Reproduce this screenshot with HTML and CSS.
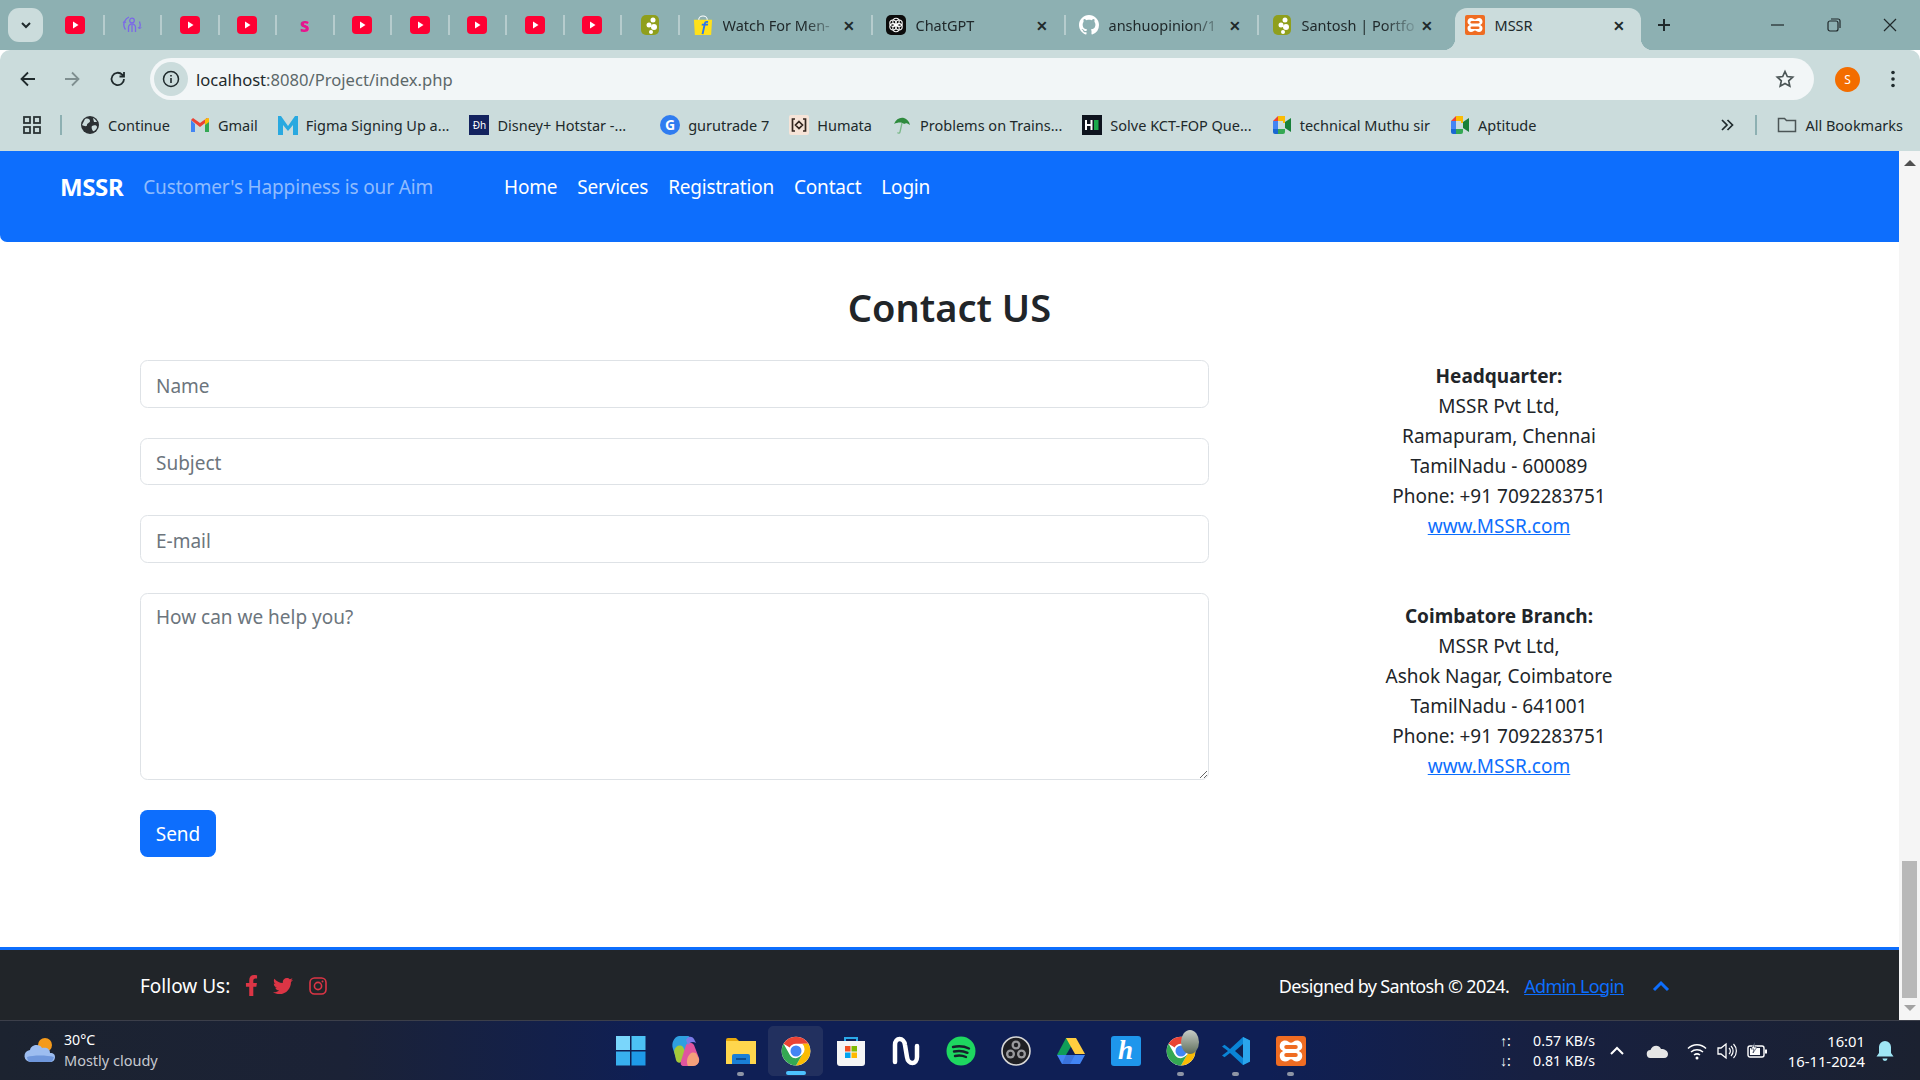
FILE: index.html
```html
<!DOCTYPE html>
<html lang="en">
<head>
  <meta charset="UTF-8" />
  <meta name="viewport" content="width=device-width, initial-scale=1.0" />
  <title>MSSR</title>
  <link rel="stylesheet" href="styles.css">
</head>
<body>
  <!-- icon sheet -->
  <svg class="sprites" xmlns="http://www.w3.org/2000/svg">
    <symbol id="yt" viewBox="0 0 20 20"><rect y="1" width="20" height="18" rx="4" fill="#ff0033"/><path d="M8 6.500l5.500 3.500L8 13.500z" fill="#fff"/></symbol>
    <symbol id="person" viewBox="0 0 20 20"><g fill="none" stroke="#7b68e8" stroke-width="1.300"><circle cx="10" cy="5.500" r="2.300"/><path d="M6.500 17v-4.500a3.500 3.500 0 0 1 7 0V17M10 10v7"/><path d="M2.500 6.500A8.500 8.500 0 0 1 7 2M17.500 6.500a8.500 8.500 0 0 1 0 7M2.500 6.500a8.500 8.500 0 0 0 1 8"/></g><path d="M16 12l1.500 2 1.800-1.800M1 8l1.500-2L4 8" fill="none" stroke="#7b68e8" stroke-width="1"/></symbol>
    <symbol id="santosh" viewBox="0 0 20 20"><rect x="1" width="18" height="20" rx="5" fill="#8f9f1c"/><circle cx="13" cy="5" r="2.500" fill="#fff"/><circle cx="9" cy="10" r="2.500" fill="#fff"/><circle cx="14" cy="12" r="3" fill="#fff"/><circle cx="11" cy="17" r="2" fill="#fff"/></symbol>
    <symbol id="flipkart" viewBox="0 0 21 21"><path d="M1 5h19l-1 16H2z" fill="#ffe11b"/><path d="M6 5a4.500 4 0 0 1 9 0" fill="none" stroke="#fff" stroke-width="1.200"/><path d="M9 20l2-9H9l.4-1.800h2C12 6.500 13.500 6 16 6.500l-.4 1.800c-1.500-.2-2 0-2.300 1H16l-.4 1.800h-2.600l-2 9z" fill="#2874f0"/></symbol>
    <symbol id="chatgpt" viewBox="0 0 20 20"><rect width="20" height="20" rx="5" fill="#0c0c0c"/><g fill="none" stroke="#fff" stroke-width="1.100"><circle cx="10" cy="6.500" r="3.200"/><circle cx="13" cy="8.200" r="3.200"/><circle cx="13" cy="11.800" r="3.200"/><circle cx="10" cy="13.500" r="3.200"/><circle cx="7" cy="11.800" r="3.200"/><circle cx="7" cy="8.200" r="3.200"/></g></symbol>
    <symbol id="github" viewBox="0 0 16 16"><path fill="#fff" d="M8 0C3.580 0 0 3.580 0 8c0 3.540 2.290 6.530 5.470 7.590.4.070.55-.17.55-.38 0-.19-.01-.82-.01-1.490-2.010.37-2.530-.49-2.690-.94-.09-.23-.48-.94-.82-1.130-.28-.15-.68-.52-.01-.53.63-.01 1.080.58 1.230.82.72 1.210 1.870.87 2.330.66.07-.52.28-.87.51-1.070-1.780-.2-3.640-.89-3.640-3.950 0-.87.31-1.590.82-2.150-.08-.2-.36-1.020.08-2.120 0 0 .67-.21 2.200.82.64-.18 1.320-.27 2-.27.68 0 1.360.09 2 .27 1.530-1.040 2.200-.82 2.200-.82.44 1.100.16 1.920.08 2.120.51.56.82 1.270.82 2.150 0 3.070-1.870 3.750-3.650 3.950.29.25.54.73.54 1.480 0 1.070-.01 1.930-.01 2.200 0 .21.15.46.55.38A8.013 8.013 0 0 0 16 8c0-4.420-3.580-8-8-8z"/></symbol>
    <symbol id="xampp" viewBox="0 0 20 20"><rect width="20" height="20" rx="2" fill="#ef6c22"/><path d="M6 3c2 0 3 1.500 4 1.500S12 3 14 3s3.500 1.500 3.500 3.800-1.500 2.500-2.300 3.200c.8.700 2.300 1 2.300 3.200S16 17 14 17s-3-1.500-4-1.500S8 17 6 17s-3.500-1.500-3.500-3.800S4 10.700 4.800 10C4 9.300 2.500 9 2.500 6.800S4 3 6 3z" fill="#fff"/><rect x="5.500" y="6" width="9" height="2.600" rx="1.300" fill="#ef6c22"/><rect x="5.500" y="11.400" width="9" height="2.600" rx="1.300" fill="#ef6c22"/></symbol>
    <symbol id="meet" viewBox="0 0 20 20"><path d="M1 6l5-5v5z" fill="#ea4335"/><path d="M6 1h7v5H6z" fill="#fbbc04"/><path d="M1 6h5v8H1z" fill="#4285f4"/><path d="M1 14h5v5H3a2 2 0 0 1-2-2z" fill="#1967d2"/><path d="M6 14h7v3a2 2 0 0 1-2 2H6z" fill="#34a853"/><path d="M13 7l6-4v14l-6-4z" fill="#188038"/><path d="M11 1h2v7h-2z" fill="#fbbc04"/></symbol>
    <symbol id="chrome" viewBox="0 0 48 48"><circle cx="24" cy="24" r="23" fill="#fff"/><path d="M24 1a23 23 0 0 1 19.900 11.500H24a11.500 11.500 0 0 0-10 5.800L4.100 12.500A23 23 0 0 1 24 1z" fill="#ea4335"/><path d="M43.900 12.500A23 23 0 0 1 24 47l10-17.500a11.500 11.500 0 0 0 0-17z" fill="#fbbc04"/><path d="M24 47A23 23 0 0 1 4.100 12.500L14 29.800a11.500 11.500 0 0 0 10 5.700l10-6z" fill="#34a853"/><circle cx="24" cy="24" r="11" fill="#fff"/><circle cx="24" cy="24" r="8.800" fill="#4285f4"/></symbol>
  </svg>

  <div class="screen">
    <!-- tab strip -->
    <div class="tabstrip">
      <button class="tab-search"><svg width="14" height="14" viewBox="0 0 14 14"><path d="M3 5l4 4 4-4" fill="none" stroke="#1f2a2c" stroke-width="2"/></svg></button>
      <div class="tab"><svg class="fav"><use href="#yt"/></svg></div>
      <div class="tab"><svg class="fav"><use href="#person"/></svg></div>
      <div class="tab"><svg class="fav"><use href="#yt"/></svg></div>
      <div class="tab"><svg class="fav"><use href="#yt"/></svg></div>
      <div class="tab"><span class="pink-s">s</span></div>
      <div class="tab"><svg class="fav"><use href="#yt"/></svg></div>
      <div class="tab"><svg class="fav"><use href="#yt"/></svg></div>
      <div class="tab"><svg class="fav"><use href="#yt"/></svg></div>
      <div class="tab"><svg class="fav"><use href="#yt"/></svg></div>
      <div class="tab"><svg class="fav"><use href="#yt"/></svg></div>
      <div class="tab"><svg class="fav"><use href="#santosh"/></svg></div>
      <div class="tab tab-wide"><svg class="fav"><use href="#flipkart"/></svg><span class="tab-title">Watch For Men-</span><span class="tab-x">&#x2715;</span></div>
      <div class="tab tab-wide"><svg class="fav"><use href="#chatgpt"/></svg><span class="tab-title">ChatGPT</span><span class="tab-x">&#x2715;</span></div>
      <div class="tab tab-wide"><svg class="fav"><use href="#github"/></svg><span class="tab-title">anshuopinion/1</span><span class="tab-x">&#x2715;</span></div>
      <div class="tab tab-wide tab-last"><svg class="fav"><use href="#santosh"/></svg><span class="tab-title">Santosh | Portfo</span><span class="tab-x">&#x2715;</span></div>
      <div class="tab tab-active"><svg class="fav"><use href="#xampp"/></svg><span class="tab-title">MSSR</span><span class="tab-x">&#x2715;</span></div>
      <svg class="new-tab" width="16" height="16" viewBox="0 0 16 16"><path d="M8 2v12M2 8h12" stroke="#20292b" stroke-width="2"/></svg>
      <div class="win-controls">
        <svg width="16" height="16" viewBox="0 0 16 16"><path d="M1 8h13" stroke="#20292b" stroke-width="1.200"/></svg>
        <svg width="16" height="16" viewBox="0 0 16 16"><rect x="2" y="4" width="10" height="10" rx="2" fill="none" stroke="#20292b" stroke-width="1.200"/><path d="M5 2h7a2 2 0 0 1 2 2v7" fill="none" stroke="#20292b" stroke-width="1.200"/></svg>
        <svg width="16" height="16" viewBox="0 0 16 16"><path d="M2 2l12 12M14 2L2 14" stroke="#20292b" stroke-width="1.200"/></svg>
      </div>
    </div>

    <!-- address bar -->
    <div class="toolbar">
      <svg class="tool" width="20" height="20" viewBox="0 0 20 20"><path d="M17 10H4M10 3.500L3.500 10l6.500 6.500" fill="none" stroke="#1f2a2c" stroke-width="1.800"/></svg>
      <svg class="tool" width="20" height="20" viewBox="0 0 20 20"><path d="M3 10h13M10 3.500l6.500 6.500-6.500 6.500" fill="none" stroke="#7f8f90" stroke-width="1.800"/></svg>
      <svg class="tool tool-reload" width="20" height="20" viewBox="0 0 20 20"><path d="M16 10a6.200 6.200 0 1 1-1.800-4.400L16 7.400M16 3v4.500h-4.500" fill="none" stroke="#1f2a2c" stroke-width="1.800"/></svg>
      <div class="omnibox">
        <span class="site-info"><svg width="18" height="18" viewBox="0 0 18 18"><circle cx="9" cy="9" r="7.500" fill="none" stroke="#1f2a2c" stroke-width="1.500"/><path d="M9 8v5M9 5v1.600" stroke="#1f2a2c" stroke-width="1.600"/></svg></span>
        <span class="url"><span class="url-host">localhost</span>:8080/Project/index.php</span>
        <svg class="star" width="20" height="20" viewBox="0 0 20 20"><path d="M10 2.500l2.300 5 5.400.6-4 3.700 1.100 5.400-4.800-2.700-4.800 2.700 1.100-5.400-4-3.700 5.400-.6z" fill="none" stroke="#4b5556" stroke-width="1.700"/></svg>
      </div>
      <span class="avatar">S</span>
      <svg class="menu-dots" width="6" height="20" viewBox="0 0 6 20"><circle cx="3" cy="3.500" r="1.800" fill="#1f2a2c"/><circle cx="3" cy="10" r="1.800" fill="#1f2a2c"/><circle cx="3" cy="16.500" r="1.800" fill="#1f2a2c"/></svg>
    </div>

    <!-- bookmarks -->
    <div class="bookmarks">
      <svg class="apps" width="20" height="20" viewBox="0 0 20 20"><g fill="none" stroke="#2b3436" stroke-width="1.800"><rect x="2" y="2" width="6" height="6"/><rect x="12" y="2" width="6" height="6"/><rect x="2" y="12" width="6" height="6"/><rect x="12" y="12" width="6" height="6"/></g></svg>
      <span class="bm-sep"></span>
      <a class="bm"><svg class="bm-icon" viewBox="0 0 20 20"><circle cx="10" cy="10" r="9" fill="#2b3033"/><path d="M5 4c3-1 5 0 5 2s-3 2-3 4-3 1-5 0zM12 11c2-1 5-1 5 1s-3 5-4 4-2-4-1-5zM13 3c2 1 3 2 4 4l-3 0z" fill="#cbdcdc"/></svg>Continue</a>
      <a class="bm"><svg class="bm-icon" viewBox="0 0 20 20"><path d="M1 5v12h4V9z" fill="#4285f4"/><path d="M19 5v12h-4V9z" fill="#34a853"/><path d="M1 5l9 7 9-7-2-2-7 5-7-5z" fill="#ea4335"/><path d="M15 4l4-1v4l-4 3z" fill="#fbbc04"/></svg>Gmail</a>
      <a class="bm"><svg class="bm-icon" viewBox="0 0 20 20"><path d="M0 20V1h3l7 10 7-10h3v19h-5V10l-5 6-5-6v10z" fill="#29a9e0"/></svg>Figma Signing Up a...</a>
      <a class="bm"><span class="bm-square bm-disney">Ðh</span>Disney+ Hotstar -...</a>
      <a class="bm bm-gap"><span class="bm-square bm-google">G</span>gurutrade 7</a>
      <a class="bm"><svg class="bm-icon" viewBox="0 0 20 20"><rect width="20" height="20" rx="2" fill="#f6e4d8"/><path d="M6 4H3.500v12H6M14 4h2.500v12H14M10 6.500L13.500 10 10 13.500 6.500 10z" fill="none" stroke="#33261f" stroke-width="1.700"/></svg>Humata</a>
      <a class="bm"><svg class="bm-icon" viewBox="0 0 20 20"><path d="M2 9C4 4 8 2 12 3c3 1 5 3 6 7-3-2-4-2-6-1-2-2-6-2-10 0z" fill="#2e8b3d"/><path d="M10 8l-2 9c-.3 1.500-2 1.500-2.500.5" fill="none" stroke="#7bb98a" stroke-width="1.300"/></svg>Problems on Trains...</a>
      <a class="bm"><svg class="bm-icon" viewBox="0 0 20 20"><rect width="20" height="20" fill="#0e141e"/><path d="M4 5v10M9.500 5v10M4 10h5.500" stroke="#fff" stroke-width="2"/><rect x="12" y="5" width="4.500" height="10" fill="#1ba94c"/></svg>Solve KCT-FOP Que...</a>
      <a class="bm"><svg class="bm-icon"><use href="#meet"/></svg>technical Muthu sir</a>
      <a class="bm"><svg class="bm-icon"><use href="#meet"/></svg>Aptitude</a>
      <svg class="bm-more" width="16" height="16" viewBox="0 0 16 16"><path d="M3 3l5 5-5 5M8.500 3l5 5-5 5" fill="none" stroke="#1f2a2c" stroke-width="1.700"/></svg>
      <span class="bm-sep bm-sep-right"></span>
      <a class="bm bm-all"><svg class="bm-icon bm-folder" viewBox="0 0 20 18"><path d="M1.500 15.500v-13h6l2 2h9v11z" fill="none" stroke="#4b5556" stroke-width="1.500"/></svg>All Bookmarks</a>
    </div>

    <!-- the page itself -->
    <div class="viewport">
      <div class="page">
        <nav class="navbar">
          <a class="brand">MSSR</a>
          <span class="tagline">Customer's Happiness is our Aim</span>
          <ul class="nav-links">
            <li><a>Home</a></li>
            <li><a>Services</a></li>
            <li><a>Registration</a></li>
            <li><a>Contact</a></li>
            <li><a>Login</a></li>
          </ul>
        </nav>

        <main class="contact">
          <h1>Contact US</h1>
          <div class="contact-row">
            <form class="contact-form">
              <input type="text" placeholder="Name" />
              <input type="text" placeholder="Subject" />
              <input type="text" placeholder="E-mail" />
              <textarea placeholder="How can we help you?"></textarea>
              <button type="button">Send</button>
            </form>
            <aside class="branches">
              <address>
                <strong>Headquarter:</strong><br>
                MSSR Pvt Ltd,<br>
                Ramapuram, Chennai<br>
                TamilNadu - 600089<br>
                Phone: +91 7092283751<br>
                <a href="#">www.MSSR.com</a>
              </address>
              <address>
                <strong>Coimbatore Branch:</strong><br>
                MSSR Pvt Ltd,<br>
                Ashok Nagar, Coimbatore<br>
                TamilNadu - 641001<br>
                Phone: +91 7092283751<br>
                <a href="#">www.MSSR.com</a>
              </address>
            </aside>
          </div>
        </main>

        <footer class="site-footer">
          <div class="follow">
            <span>Follow Us:</span>
            <svg class="soc-f" viewBox="0 0 320 512"><path d="M279.140 288l14.220-92.660h-88.910v-60.130c0-25.350 12.420-50.060 52.240-50.060h40.420V6.260S260.430 0 225.360 0c-73.220 0-121.080 44.380-121.080 124.720v70.620H22.890V288h81.390v224h100.170V288z"/></svg>
            <svg class="soc-t" viewBox="0 0 512 512"><path d="M459.370 151.716c.325 4.548.325 9.097.325 13.645 0 138.720-105.583 298.558-298.558 298.558-59.452 0-114.680-17.219-161.137-47.106 8.447.974 16.568 1.299 25.340 1.299 49.055 0 94.213-16.568 130.274-44.832-46.132-.975-84.792-31.188-98.112-72.772 6.498.974 12.995 1.624 19.818 1.624 9.421 0 18.843-1.300 27.614-3.573-48.081-9.747-84.143-51.980-84.143-102.985v-1.299c13.969 7.797 30.214 12.670 47.431 13.319-28.264-18.843-46.781-51.005-46.781-87.391 0-19.492 5.197-37.360 14.294-52.954 51.655 63.675 129.300 105.258 216.365 109.807-1.624-7.797-2.599-15.918-2.599-24.040 0-57.828 46.782-104.934 104.934-104.934 30.213 0 57.502 12.670 76.670 33.137 23.715-4.548 46.456-13.320 66.599-25.340-7.798 24.366-24.366 44.833-46.132 57.827 21.117-2.273 41.584-8.122 60.426-16.243-14.292 20.791-32.161 39.308-52.628 54.253z"/></svg>
            <svg class="soc-i" viewBox="0 0 18 18"><g fill="none" stroke="#dc3545" stroke-width="1.600"><rect x="1" y="1" width="16" height="16" rx="4.500"/><circle cx="9" cy="9" r="3.600"/></g><circle cx="13.500" cy="4.500" r="1" fill="#dc3545"/></svg>
          </div>
          <div class="credits">
            <span>Designed by Santosh © 2024.</span>
            <a href="#">Admin Login</a>
            <svg class="to-top" width="18" height="12" viewBox="0 0 18 12"><path d="M2 10l7-7 7 7" fill="none" stroke="#0d6efd" stroke-width="3"/></svg>
          </div>
        </footer>
      </div>
      <div class="scrollbar">
        <span class="arrow-up"></span>
        <span class="thumb"></span>
        <span class="arrow-down"></span>
      </div>
    </div>

    <!-- windows taskbar -->
    <div class="taskbar">
      <div class="weather">
        <svg width="32" height="26" viewBox="0 0 32 26"><circle cx="21" cy="8" r="7" fill="#f59a1b"/><path d="M7 25a6 6 0 0 1-1-12c1-5 9-7 12-2 5-1 8 1 8 5 4 0 5 2 5 4 0 3-2 5-5 5z" fill="#9dbdf0"/><path d="M3 20c6-2 20-2 27 0-1 3-2 5-4 5H7c-2 0-4-2-4-5z" fill="#6f97dc"/></svg>
        <div class="weather-text"><span>30°C</span><span class="weather-sub">Mostly cloudy</span></div>
      </div>
      <div class="task-icons">
        <span class="task"><svg width="30" height="30" viewBox="0 0 30 30"><rect y="0" width="14" height="14" fill="#7ad6fb"/><rect x="15.500" width="14" height="14" fill="#4cc2f5"/><rect y="15.500" width="14" height="14" fill="#38b0ee"/><rect x="15.500" y="15.500" width="14" height="14" fill="#1e9ae8"/></svg></span>
        <span class="task"><svg width="30" height="32" viewBox="0 0 30 32"><path d="M8 1h8c3 0 4 2 3 5l-4 17c-1 5-8 5-10 0L2 14C0 8 3 2 8 1z" fill="#2f9fe0"/><path d="M3 16c1-5 6-7 9-4l2 4-3 10c-2 3-5 2-6-1z" fill="#a4c93a"/><path d="M15 10c2-3 6-3 8 0l5 13c1 4-2 8-6 8h-9c-3 0-4-2-3-5z" fill="#e0559e"/><path d="M19 19c2-2 6-2 7 1l2 4c.5 4-2 7-6 7h-5c-2-4-1-9 2-12z" fill="#f4a07a"/><path d="M15 5c2-4 6-4 8-1l2 4c-3-2-6-1-8 2z" fill="#7a7ae8"/></svg></span>
        <span class="task task-open"><svg width="30" height="30" viewBox="0 0 30 30"><path d="M0 4a2 2 0 0 1 2-2h8l3 3H0z" fill="#e8a80c"/><path d="M0 5h30v23H0z" fill="#ffd64d"/><path d="M6 20a2 2 0 0 1 2-2h14a2 2 0 0 1 2 2v8H6z" fill="#1a7fd6"/><path d="M10 23h10" stroke="#0b4f94" stroke-width="2"/></svg></span>
        <span class="task task-active"><svg width="30" height="30"><use href="#chrome"/></svg></span>
        <span class="task"><svg width="30" height="32" viewBox="0 0 30 32"><path d="M9 6V3h12v3" fill="none" stroke="#2aa8e8" stroke-width="2"/><path d="M1 6h28v22a3 3 0 0 1-3 3H4a3 3 0 0 1-3-3z" fill="#f5f5f5"/><rect x="9" y="11" width="5.500" height="5.500" fill="#f25022"/><rect x="15.500" y="11" width="5.500" height="5.500" fill="#7fba00"/><rect x="9" y="17.500" width="5.500" height="5.500" fill="#00a4ef"/><rect x="15.500" y="17.500" width="5.500" height="5.500" fill="#ffb900"/></svg></span>
        <span class="task"><svg width="28" height="30" viewBox="0 0 28 30"><path d="M3 26V9c0-8 9-8 10 0l2 12c1 8 10 8 10 0V10" fill="none" stroke="#fff" stroke-width="4.500" stroke-linecap="round"/></svg></span>
        <span class="task"><svg width="30" height="30" viewBox="0 0 30 30"><circle cx="15" cy="15" r="14.500" fill="#1ed760"/><path d="M7 11c6-1.500 11-1 16 1.500M8 15.500c5-1 9-.8 13.500 1.300M9 20c4-.8 7.500-.6 11 1" fill="none" stroke="#16212b" stroke-width="2.400" stroke-linecap="round"/></svg></span>
        <span class="task"><svg width="30" height="30" viewBox="0 0 30 30"><circle cx="15" cy="15" r="14" fill="#1f1f23" stroke="#d8d8d8" stroke-width="1.600"/><g fill="#9a9a9e"><circle cx="15" cy="9" r="4.500"/><circle cx="20.500" cy="18" r="4.500"/><circle cx="9.500" cy="18" r="4.500"/></g><g fill="#1f1f23"><circle cx="15" cy="9" r="2.200"/><circle cx="20.500" cy="18" r="2.200"/><circle cx="9.500" cy="18" r="2.200"/></g></svg></span>
        <span class="task"><svg width="30" height="28" viewBox="0 0 30 28"><path d="M10 1h10l-10 17H1z" fill="#0f9d58"/><path d="M20 1l9 16h-10L10 1z" fill="#ffcd40"/><path d="M1 18h28l-5 9H6z" fill="#4285f4"/><path d="M10 18h9l-5 9H6z" fill="#3a73dc"/></svg></span>
        <span class="task"><span class="humaans">h</span></span>
        <span class="task task-open"><svg width="30" height="30"><use href="#chrome"/></svg><span class="chrome-badge"></span></span>
        <span class="task task-open"><svg width="30" height="30" viewBox="0 0 30 30"><path d="M22 1l7 3.500v21L22 29 9 17l-5.500 4.200L1 19.500 7 15 1 10.500l2.500-1.700L9 13z" fill="#0a84d6"/><path d="M22 8l-8 7 8 7z" fill="#0f1f4f"/><path d="M22 1l7 3.500v21L22 29z" fill="#2ba5ec"/></svg></span>
        <span class="task task-open"><svg width="30" height="30"><use href="#xampp"/></svg></span>
      </div>
      <div class="tray">
        <div class="netspeed">
          <span class="net-line"><span>↑:</span><span>0.57 KB/s</span></span>
          <span class="net-line"><span>↓:</span><span>0.81 KB/s</span></span>
        </div>
        <svg class="tray-up" width="16" height="16" viewBox="0 0 16 16"><path d="M2 11l6-6 6 6" fill="none" stroke="#fff" stroke-width="2"/></svg>
        <svg class="tray-cloud" width="22" height="14" viewBox="0 0 22 14"><path d="M5 14a4 4 0 0 1-.500-8C6 1 13 0 15 5c4 0 7 2 7 5 0 2-1 4-4 4z" fill="#e6e6e6"/></svg>
        <svg class="tray-wifi" width="20" height="18" viewBox="0 0 20 18"><g fill="none" stroke="#fff" stroke-width="1.500"><path d="M1 6.500c5-5 13-5 18 0M4 10c3.500-3 8.500-3 12 0M7 13c2-1.500 4-1.500 6 0"/></g><circle cx="10" cy="16" r="1.500" fill="#fff"/></svg>
        <svg class="tray-vol" width="20" height="18" viewBox="0 0 20 18"><path d="M1 6h3l5-4v14l-5-4H1z" fill="none" stroke="#fff" stroke-width="1.300"/><path d="M12 6a4 4 0 0 1 0 6M14 4a7 7 0 0 1 0 10M16.500 2a10 10 0 0 1 0 14" fill="none" stroke="#fff" stroke-width="1.200"/></svg>
        <svg class="tray-batt" width="20" height="18" viewBox="0 0 20 18"><rect x="1" y="4" width="16" height="11" rx="2" fill="none" stroke="#fff" stroke-width="1.400"/><rect x="3" y="6" width="10" height="7" fill="#fff"/><rect x="18" y="7.500" width="2" height="4" fill="#fff"/><path d="M8 0L4 7h3l-1 4 4-6H7z" fill="#fff" stroke="#14203a" stroke-width=".6"/></svg>
        <div class="clock"><span>16:01</span><span>16-11-2024</span></div>
        <svg class="tray-bell" width="18" height="22" viewBox="0 0 18 22"><path d="M9 1a6 6 0 0 1 6 6v6l2.500 3.500H.5L3 13V7a6 6 0 0 1 6-6z" fill="#9fe6f5"/><path d="M6.500 18.500h5a2.500 2.500 0 0 1-5 0z" fill="#9fe6f5"/></svg>
      </div>
    </div>
  </div>
</body>
</html>
```

FILE: styles.css
```css
* {
  box-sizing: border-box;
}
html, body {
  margin: 0;
  height: 100%;
  overflow: hidden;
}
body {
  font-family: "Noto Sans", Arial, sans-serif;
  background: #fff;
}
.sprites {
  display: none;
}
.screen {
  width: 1920px;
  height: 1080px;
  display: flex;
  flex-direction: column;
}

/* tab strip */
.tabstrip {
  height: 50px;
  flex: none;
  display: flex;
  align-items: flex-start;
  background: #8db0b2;
  color: #20292b;
  font-size: 14.5px;
}
.tab-search {
  width: 35px;
  height: 34px;
  margin: 8px 4px 0 8px;
  padding: 0;
  border: none;
  border-radius: 11px;
  background: #cbdcdc;
  display: flex;
  align-items: center;
  justify-content: center;
}
.tab {
  width: 57.5px;
  height: 20px;
  margin-top: 15px;
  flex: none;
  display: flex;
  align-items: center;
  justify-content: center;
  border-right: 2px solid #b6cccd;
}
.fav {
  width: 20px;
  height: 20px;
  flex: none;
}
.pink-s {
  color: #e6168f;
  font-weight: 800;
  font-size: 19px;
  line-height: 20px;
}
.tab-wide {
  width: 193px;
  padding: 0 15px 0 13px;
  justify-content: flex-start;
}
.tab-last {
  width: 196px;
  border-right: none;
  padding-right: 21px;
}
.tab-title {
  flex: 1;
  margin-left: 10px;
  white-space: nowrap;
  -webkit-mask-image: linear-gradient(to right, #000 72%, rgba(0, 0, 0, 0.15) 100%);
  mask-image: linear-gradient(to right, #000 72%, rgba(0, 0, 0, 0.15) 100%);
}
.tab-x {
  width: 14px;
  margin-left: 6px;
  font-size: 14px;
  font-weight: 700;
  text-align: center;
}
.tab-active {
  position: relative;
  width: 186px;
  height: 42px;
  margin-top: 8px;
  padding: 0 15px 8px 10px;
  justify-content: flex-start;
  border: none;
  border-radius: 12px 12px 0 0;
  background: #cbdcdc;
}
.tab-active .tab-title {
  -webkit-mask-image: none;
  mask-image: none;
}
.tab-active::before,
.tab-active::after {
  content: "";
  position: absolute;
  bottom: 0;
  width: 12px;
  height: 12px;
}
.tab-active::before {
  left: -12px;
  background: radial-gradient(circle at 0 0, transparent 12px, #cbdcdc 12.5px);
}
.tab-active::after {
  right: -12px;
  background: radial-gradient(circle at 100% 0, transparent 12px, #cbdcdc 12.5px);
}
.new-tab {
  margin: 17px 0 0 15px;
  flex: none;
}
.win-controls {
  margin: 17px 22px 0 auto;
  display: flex;
  gap: 40px;
}

/* address bar */
.toolbar {
  height: 50px;
  flex: none;
  padding: 8px 0 0 18px;
  display: flex;
  align-items: center;
  background: #cbdcdc;
  border-radius: 10px 10px 0 0;
}
.tool {
  flex: none;
  margin-right: 24px;
}
.tool-reload {
  margin-left: 2px;
}
.omnibox {
  width: 1664px;
  height: 42px;
  flex: none;
  margin-left: -2px;
  padding: 0 19px 0 4px;
  display: flex;
  align-items: center;
  border-radius: 21px;
  background: #f2f6f7;
}
.site-info {
  width: 34px;
  height: 34px;
  flex: none;
  display: flex;
  align-items: center;
  justify-content: center;
  border-radius: 50%;
  background: #cbdcdc;
}
.url {
  margin-left: 8px;
  font-size: 16.6px;
  color: #5c686a;
}
.url-host {
  color: #1f2a2c;
}
.star {
  margin-left: auto;
}
.avatar {
  width: 25px;
  height: 25px;
  margin-left: 21px;
  flex: none;
  border-radius: 50%;
  background: #f36d00;
  color: #fff;
  font-size: 12px;
  line-height: 25px;
  text-align: center;
}
.menu-dots {
  margin-left: 30px;
  flex: none;
}

/* bookmarks */
.bookmarks {
  height: 51px;
  flex: none;
  padding: 0 17px 2px 22px;
  display: flex;
  align-items: center;
  background: #cbdcdc;
  color: #20292b;
  font-size: 14.5px;
}
.apps {
  flex: none;
}
.bm-sep {
  width: 2px;
  height: 20px;
  margin: 0 18px;
  flex: none;
  background: #8db0b2;
}
.bm {
  margin-right: 20px;
  flex: none;
  display: flex;
  align-items: center;
  gap: 8px;
  white-space: nowrap;
}
.bm-icon {
  width: 20px;
  height: 20px;
  flex: none;
}
.bm-square {
  width: 20px;
  height: 20px;
  flex: none;
  font-size: 10px;
  line-height: 20px;
  text-align: center;
  color: #fff;
}
.bm-disney {
  background: #13235f;
}
.bm-google {
  border-radius: 50%;
  background: #2f7cf0;
  font-size: 14px;
  font-weight: 700;
}
.bm-gap {
  margin-left: 14px;
}
.bm-more {
  margin-left: auto;
  flex: none;
}
.bm-sep-right {
  margin: 0 20px;
}
.bm-all {
  margin-right: 0;
}
.bm-folder {
  height: 18px;
}

/* page */
.viewport {
  flex: 1;
  min-height: 0;
  display: flex;
}
.page {
  flex: 1;
  min-width: 0;
  display: flex;
  flex-direction: column;
  font-size: 19px;
  line-height: 30px;
  color: #212529;
}
.navbar {
  height: 91px;
  flex: none;
  padding: 21px 0 0 60px;
  display: flex;
  align-items: flex-start;
  background: #0d6efd;
  border-radius: 0 0 0 7px;
  color: #fff;
}
.brand {
  font-size: 24px;
  font-weight: 700;
  letter-spacing: -0.4px;
}
.tagline {
  margin-left: 20px;
  letter-spacing: -0.15px;
  color: rgba(255, 255, 255, 0.55);
}
.nav-links {
  margin: 0 0 0 71px;
  padding: 0;
  list-style: none;
  display: flex;
  gap: 20px;
  letter-spacing: -0.2px;
}
.contact {
  flex: 1;
}
.contact h1 {
  margin: 41px 0 29px;
  font-size: 38px;
  line-height: 48px;
  font-weight: 600;
  text-align: center;
}
.contact-row {
  padding-left: 140px;
  display: flex;
}
.contact-form {
  width: 1069px;
  flex: none;
  display: flex;
  flex-direction: column;
  align-items: flex-start;
  gap: 30px;
}
.contact-form input,
.contact-form textarea {
  width: 100%;
  padding: 10px 15px 6px;
  border: 1px solid #dee2e6;
  border-radius: 7.5px;
  font: inherit;
  color: #212529;
  background: #fff;
}
.contact-form input {
  height: 47.5px;
}
.contact-form textarea {
  height: 187px;
  padding-top: 8px;
}
.contact-form ::placeholder {
  color: #6c757d;
  opacity: 1;
}
.contact-form button {
  width: 76px;
  height: 47.5px;
  padding: 2px 0 0;
  border: none;
  border-radius: 7.5px;
  background: #0d6efd;
  color: #fff;
  font: inherit;
}
.branches {
  width: 580px;
  flex: none;
  padding-top: 1px;
  text-align: center;
}
.branches address {
  margin-bottom: 60px;
  font-style: normal;
}
.branches a {
  color: #0d6efd;
}
.branches strong {
  font-weight: 700;
}
.site-footer {
  height: 73px;
  flex: none;
  padding: 1px 229px 0 140px;
  display: flex;
  align-items: center;
  justify-content: space-between;
  border-top: 3px solid #0d6efd;
  background: #212529;
  color: #fff;
}
.follow {
  display: flex;
  align-items: center;
}
.follow svg {
  fill: #dc3545;
}
.soc-f {
  width: 13px;
  height: 21px;
  margin-left: 15px;
}
.soc-t {
  width: 20px;
  height: 20px;
  margin-left: 15px;
}
.soc-i {
  width: 18px;
  height: 18px;
  margin-left: 16px;
}
.credits {
  display: flex;
  align-items: center;
  font-size: 18px;
  letter-spacing: -0.65px;
}
.credits a {
  margin-left: 15px;
  color: #0d6efd;
  text-decoration: underline;
}
.to-top {
  margin-left: 28px;
}

/* scrollbar */
.scrollbar {
  width: 21px;
  flex: none;
  padding: 9px 0;
  display: flex;
  flex-direction: column;
  align-items: center;
  background: #f5f5f5;
}
.arrow-up,
.arrow-down {
  width: 0;
  height: 0;
  border-left: 6px solid transparent;
  border-right: 6px solid transparent;
}
.arrow-up {
  border-bottom: 6px solid #505050;
}
.arrow-down {
  margin-top: 7px;
  border-top: 6px solid #a3a3a3;
}
.thumb {
  width: 15px;
  height: 137px;
  margin-top: auto;
  background: #b8b8b8;
}

/* taskbar */
.taskbar {
  height: 60px;
  flex: none;
  display: flex;
  align-items: center;
  border-top: 1px solid #3c3f4a;
  background: linear-gradient(to right, #1c2330 0, #1b2236 18%, #0f1f55 34%, #0f1f55 66%, #172041 80%, #1b2130 100%);
  color: #fff;
  font-size: 14.2px;
}
.weather {
  width: 603px;
  flex: none;
  padding: 0 0 2px 24px;
  display: flex;
  align-items: center;
  gap: 8px;
}
.weather-text {
  display: flex;
  flex-direction: column;
  line-height: 20px;
}
.weather-sub {
  font-size: 14.5px;
  color: #c6c9d0;
}
.task-icons {
  display: flex;
  flex: none;
}
.task {
  position: relative;
  width: 55px;
  height: 50px;
  display: flex;
  align-items: center;
  justify-content: center;
}
.task-open::after,
.task-active::after {
  content: "";
  position: absolute;
  bottom: 0;
  left: 50%;
  width: 7px;
  height: 4px;
  margin-left: -3.5px;
  border-radius: 2px;
  background: #8e95a5;
}
.task-active {
  border: 1px solid #22305f;
  border-radius: 5px;
  background: #22305f;
}
.task-active::after {
  width: 20px;
  margin-left: -10px;
  background: #4cc2ff;
}
.humaans {
  width: 30px;
  height: 30px;
  border-radius: 3px;
  background: #1e96ec;
  color: #fff;
  font-family: "Liberation Serif", serif;
  font-style: italic;
  font-weight: 700;
  font-size: 27px;
  line-height: 28px;
  text-align: center;
}
.chrome-badge {
  position: absolute;
  top: 4px;
  left: 28px;
  width: 18px;
  height: 24px;
  border-radius: 50%;
  background: linear-gradient(#c8cdc8, #5f6f5a);
}
.tray {
  flex: 1;
  padding: 0 26px 0 182px;
  display: flex;
  align-items: center;
}
.netspeed {
  width: 95px;
  flex: none;
  display: flex;
  flex-direction: column;
  line-height: 20px;
}
.net-line {
  display: flex;
  justify-content: space-between;
}
.tray-up {
  margin-left: 14px;
}
.tray-cloud {
  margin-left: 21px;
}
.tray-wifi {
  margin-left: 19px;
}
.tray-vol {
  margin-left: 10px;
}
.tray-batt {
  margin-left: 10px;
}
.clock {
  margin-left: auto;
  display: flex;
  flex-direction: column;
  align-items: flex-end;
  font-size: 14.8px;
  line-height: 20px;
}
.tray-bell {
  margin-left: 11px;
}
```
